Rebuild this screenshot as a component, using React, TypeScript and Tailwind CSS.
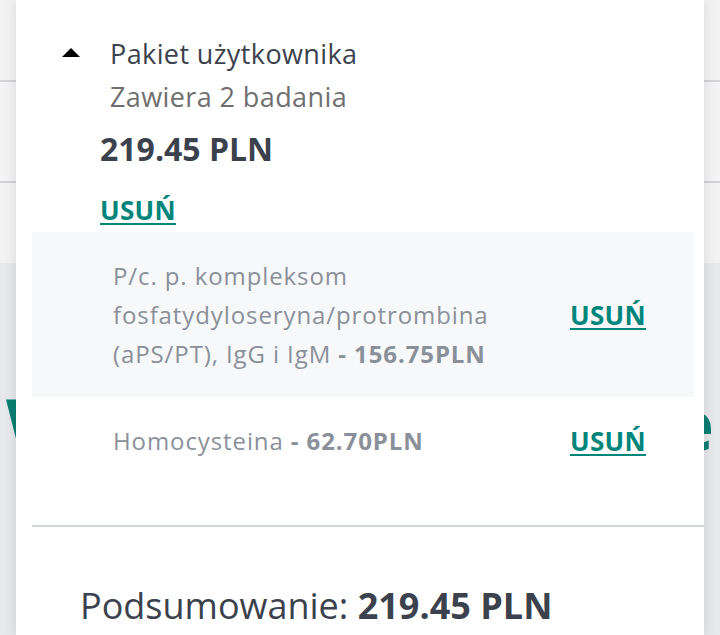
const items = [
  {
    name: 'P/c. p. kompleksom fosfatydyloseryna/protrombina (aPS/PT), IgG i IgM',
    price: '156.75PLN',
    shaded: true,
  },
  { name: 'Homocysteina', price: '62.70PLN', shaded: false },
];

const RemoveLink = () => (
  <a
    href="#"
    className="text-[26px] font-bold leading-[30px] tracking-[0.3px] text-[#00857a] underline decoration-[2px] underline-offset-[3px]"
  >
    USUŃ
  </a>
);

const App = () => {
  return (
    <div className="relative h-[635px] w-[720px] overflow-hidden bg-[#f3f3f4] font-['Open_Sans',sans-serif]">
      {/* Page behind the drawer */}
      <div className="flex h-full flex-col">
        <div className="h-[82px] border-b-2 border-[#d2d3d7]" />
        <div className="h-[101px] border-b-2 border-[#d2d3d7]" />
        <div className="h-[80px]" />
        <div className="flex flex-1 justify-between bg-[#e7e8eb] px-[6px] pt-[124px]">
          <span className="text-[72px] font-bold leading-none text-[#0a7f72]">W</span>
          <span className="text-[72px] font-bold leading-none text-[#0a7f72]">e</span>
        </div>
      </div>

      {/* Drawer */}
      <div className="absolute left-[16px] top-0 flex h-full w-[688px] flex-col bg-white shadow-[0_0_12px_rgba(0,0,0,0.12)]">
        <div className="flex items-start pl-[46px] pt-[32px]">
          <svg width="18" height="9" viewBox="0 0 18 9" className="mt-[16px]">
            <polygon points="9,0 18,9 0,9" fill="#000" />
          </svg>
          <div className="ml-[30px] flex flex-col tracking-[0.4px]">
            <span className="text-[27px] leading-[43px] text-[#3c424d]">Pakiet użytkownika</span>
            <span className="text-[27px] leading-[43px] text-[#6f6f6f]">Zawiera 2 badania</span>
          </div>
        </div>

        <div className="ml-[84px] mt-[11px] text-[32px] font-bold leading-[40px] text-[#3c424d]">219.45 PLN</div>
        <div className="ml-[84px] mt-[26px] leading-[30px]">
          <RemoveLink />
        </div>

        <div className="mt-[3px] mr-[10px] ml-[16px]">
          {items.map((item) => (
            <div
              key={item.name}
              className={`flex items-center justify-between py-[24px] pl-[81px] pr-[48px] ${
                item.shaded ? 'bg-[#f7f8fa]' : ''
              }`}
            >
              <p className="w-[420px] text-[24px] leading-[39px] tracking-[0.9px] text-[#8a9099]">
                {item.name} <span className="font-bold">- {item.price}</span>
              </p>
              <RemoveLink />
            </div>
          ))}
        </div>

        <div className="mt-[41px] ml-[16px] border-t-2 border-[#d3d6da]" />

        <div className="ml-[64px] mt-[57px] text-[36px] leading-[44px] text-[#3c424d]">
          Podsumowanie: <span className="font-bold">219.45 PLN</span>
        </div>
      </div>
    </div>
  );
};

export default App;
